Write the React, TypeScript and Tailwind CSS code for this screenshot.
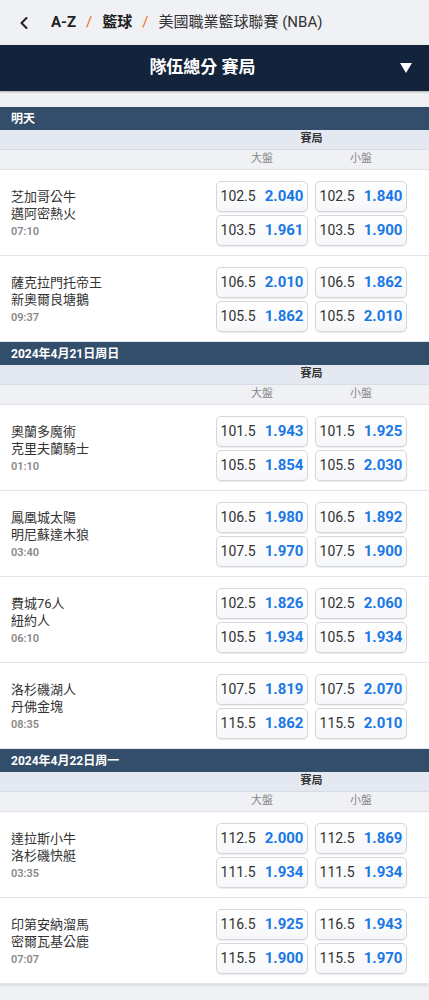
import { ChevronLeft } from 'lucide-react';

type Match = { home: string; away: string; time: string; odds: [string, string, string, string][] };
type Section = { title: string; matches: Match[] };

const sections: Section[] = [
    {
        title: '明天',
        matches: [
            { home: '芝加哥公牛', away: '邁阿密熱火', time: '07:10', odds: [['102.5', '2.040', '102.5', '1.840'], ['103.5', '1.961', '103.5', '1.900']] },
            { home: '薩克拉門托帝王', away: '新奧爾良塘鵝', time: '09:37', odds: [['106.5', '2.010', '106.5', '1.862'], ['105.5', '1.862', '105.5', '2.010']] },
        ],
    },
    {
        title: '2024年4月21日周日',
        matches: [
            { home: '奧蘭多魔術', away: '克里夫蘭騎士', time: '01:10', odds: [['101.5', '1.943', '101.5', '1.925'], ['105.5', '1.854', '105.5', '2.030']] },
            { home: '鳳凰城太陽', away: '明尼蘇達木狼', time: '03:40', odds: [['106.5', '1.980', '106.5', '1.892'], ['107.5', '1.970', '107.5', '1.900']] },
            { home: '費城76人', away: '紐約人', time: '06:10', odds: [['102.5', '1.826', '102.5', '2.060'], ['105.5', '1.934', '105.5', '1.934']] },
            { home: '洛杉磯湖人', away: '丹佛金塊', time: '08:35', odds: [['107.5', '1.819', '107.5', '2.070'], ['115.5', '1.862', '115.5', '2.010']] },
        ],
    },
    {
        title: '2024年4月22日周一',
        matches: [
            { home: '達拉斯小牛', away: '洛杉磯快艇', time: '03:35', odds: [['112.5', '2.000', '112.5', '1.869'], ['111.5', '1.934', '111.5', '1.934']] },
            { home: '印第安納溜馬', away: '密爾瓦基公鹿', time: '07:07', odds: [['116.5', '1.925', '116.5', '1.943'], ['115.5', '1.900', '115.5', '1.970']] },
        ],
    },
];

function OddButton({ line, price }: { line: string; price: string }) {
    return (
        <button className="w-[92px] h-[31px] flex items-center justify-center gap-[9px] rounded-[5px] border border-[#d3d6db] bg-gradient-to-b from-white to-[#f6f7f9] shadow-[0_1px_1px_rgba(0,0,0,0.08)]">
            <span className="text-[14px] text-[#333]">{line}</span>
            <span className="text-[15px] font-bold text-[#1a78e6]">{price}</span>
        </button>
    );
}

function MatchRow({ match }: { match: Match }) {
    return (
        <div className="flex items-center justify-between pl-[11px] pr-[22px] pt-[11px] pb-[9px] bg-white border-b border-[#e2e5ea]">
            <div className="flex flex-col">
                <span className="text-[13px] leading-[16px] text-[#333]">{match.home}</span>
                <span className="text-[13px] leading-[16px] mt-[1px] text-[#333]">{match.away}</span>
                <span className="text-[11px] leading-[14px] mt-[3px] font-semibold text-[#888]">{match.time}</span>
            </div>
            <div className="flex flex-col gap-[3px]">
                {match.odds.map((o, i) => (
                    <div key={i} className="flex gap-[7px]">
                        <OddButton line={o[0]} price={o[1]} />
                        <OddButton line={o[2]} price={o[3]} />
                    </div>
                ))}
            </div>
        </div>
    );
}

export default function App() {
    return (
        <div className="min-h-[1000px] bg-[#f0f1f5] font-['Roboto','Noto_Sans_CJK_TC',sans-serif]">
            {/* Breadcrumb */}
            <div className="h-[45px] flex items-center pl-[14px] text-[15px] text-[#222]">
                <ChevronLeft className="w-[20px] h-[20px] text-[#222]" strokeWidth={2.5} />
                <span className="ml-[17px] font-bold">A-Z</span>
                <span className="mx-[10px] text-[#f26a21]">/</span>
                <span className="font-bold">籃球</span>
                <span className="mx-[10px] text-[#f26a21]">/</span>
                <span className="text-[#333]">美國職業籃球聯賽 (NBA)</span>
            </div>

            {/* Market title */}
            <div className="relative h-[46px] bg-[#12233b] flex items-center justify-center pr-[24px] shadow-[0_1px_2px_rgba(0,0,0,0.3)]">
                <span className="text-[17px] font-bold text-white">隊伍總分 賽局</span>
                <svg className="absolute right-[17px] top-[18px]" width="12" height="10" viewBox="0 0 12 10">
                    <path d="M0 0 H12 L6 10 Z" fill="white" />
                </svg>
            </div>

            <div className="mt-[16px] shadow-[0_1px_3px_rgba(0,0,0,0.12)]">
                {sections.map((s) => (
                    <div key={s.title}>
                        <div className="h-[23px] bg-[#334e6b] flex items-center pl-[11px] text-[12px] font-bold text-white">
                            {s.title}
                        </div>
                        <div className="h-[20px] bg-[#e4e9f1] border-b border-[#d8dde5] flex items-center pr-[22px] justify-end">
                            <span className="w-[191px] text-center text-[11px] font-bold text-[#333]">賽局</span>
                        </div>
                        <div className="h-[20px] bg-[#eff1f5] border-b border-[#dfe2e8] flex items-center pr-[22px] justify-end gap-[7px]">
                            <span className="w-[92px] text-center text-[11px] text-[#888]">大盤</span>
                            <span className="w-[92px] text-center text-[11px] text-[#888]">小盤</span>
                        </div>
                        {s.matches.map((m) => (
                            <MatchRow key={m.home} match={m} />
                        ))}
                    </div>
                ))}
            </div>
        </div>
    );
}
